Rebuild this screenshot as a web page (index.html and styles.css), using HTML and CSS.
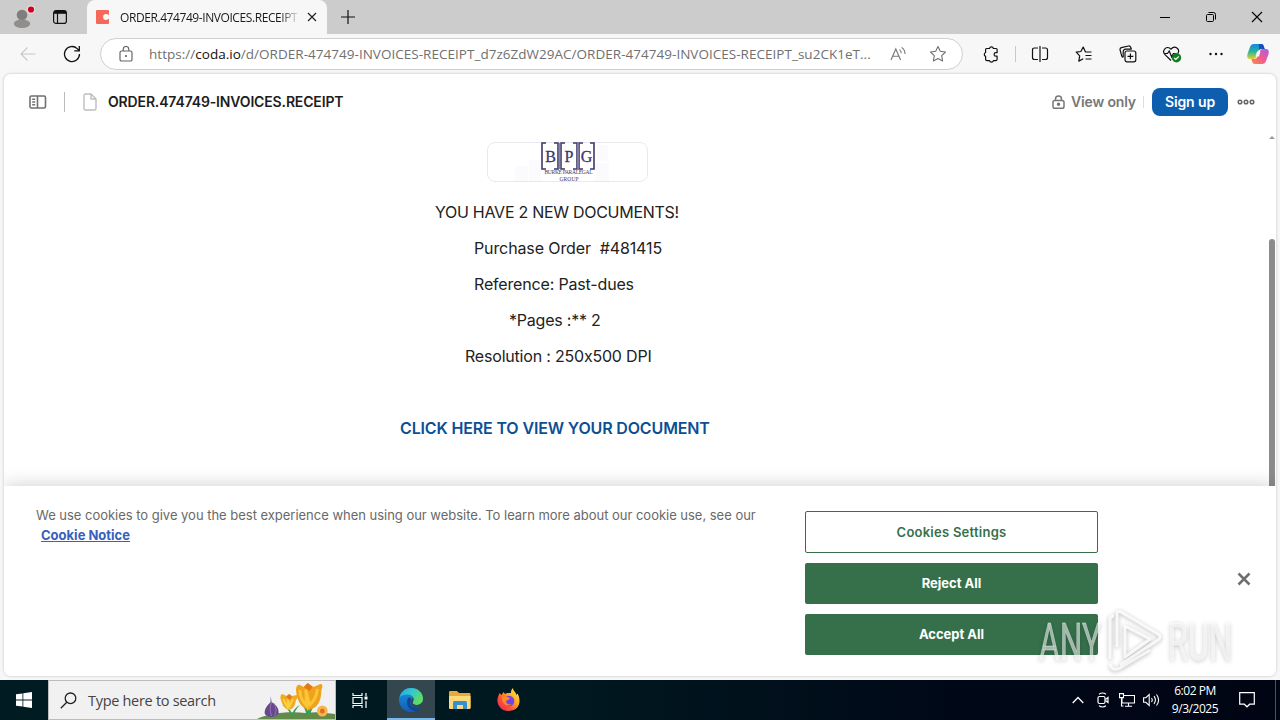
FILE: index.html
```
<!DOCTYPE html>
<html lang="en">
<head>
	<meta charset="utf-8">
	<title>ORDER.474749-INVOICES.RECEIPT</title>
	<link rel="stylesheet" href="styles.css">
</head>
<body>
<div class="screen">
	<!-- tab strip -->
	<div class="tabs">
		<svg class="avatar" width="26" height="24" viewBox="0 0 26 24">
			<circle cx="13" cy="10" r="5.3" fill="#817d7a"/>
			<ellipse cx="13" cy="18.800" rx="8.2" ry="4.2" fill="#918d8a"/>
			<circle cx="22" cy="4.500" r="4.300" fill="#e5dede"/>
			<circle cx="22" cy="4.500" r="3.1" fill="#d2001f"/>
		</svg>
		<svg class="workspaces" width="16" height="16" viewBox="0 0 16 16" fill="none" stroke="#111">
			<rect x="1.6" y="1.6" width="12.8" height="12.8" rx="2.5" stroke-width="1.2"/>
			<path d="M2 3.3h12" stroke-width="3"/><path d="M5.5 4v10" stroke-width="1.2"/>
		</svg>
		<div class="tab">
			<svg width="14" height="14" viewBox="0 0 14 14"><path d="M1 0h11a1 1 0 0 1 1 1v4.2c-1.200-.8-2-1.100-3-1.100a2.900 2.900 0 0 0 0 5.800c1 0 1.800-.3 3-1.100V13a1 1 0 0 1-1 1H1a1 1 0 0 1-1-1V1a1 1 0 0 1 1-1z" fill="#f5695b"/></svg>
			<span class="tab_title">ORDER.474749-INVOICES.RECEIPT</span>
			<svg class="tab_close" width="10" height="10" viewBox="0 0 10 10" stroke="#222" stroke-width="1.2"><path d="M1 1l8 8M9 1l-8 8"/></svg>
		</div>
		<svg class="new_tab" width="14" height="14" viewBox="0 0 14 14" stroke="#111" stroke-width="1.2"><path d="M7 0v14M0 7h14"/></svg>
		<div class="win_btns">
			<svg width="12" height="12" viewBox="0 0 12 12" stroke="#000"><path d="M1 6.500h10"/></svg>
			<svg width="12" height="12" viewBox="0 0 12 12" fill="none" stroke="#000"><rect x="1.500" y="3.500" width="7" height="7" rx="1"/><path d="M3.500 1.500h5a2 2 0 0 1 2 2v5"/></svg>
			<svg width="12" height="12" viewBox="0 0 12 12" stroke="#000" stroke-width="1.100"><path d="M1 1l10 10M11 1L1 11"/></svg>
		</div>
	</div>

	<!-- address bar -->
	<div class="toolbar">
		<svg class="back" width="16" height="16" viewBox="0 0 16 16" fill="none" stroke="#c8c8c8" stroke-width="1.100"><path d="M15.500 8H1M7.500 1.500L1 8l6.500 6.500"/></svg>
		<svg class="reload" width="18" height="18" viewBox="0 0 18 18" fill="none" stroke="#111" stroke-width="1.300"><path d="M16.500 9a7.500 7.500 0 1 1-2.300-5.400L16.300 5.700M16.300 1v4.900h-5"/></svg>
		<div class="address">
			<svg class="lock" width="14" height="16" viewBox="0 0 14 16" fill="none" stroke="#666" stroke-width="1.200"><rect x="1" y="5" width="12" height="10" rx="1.600"/><path d="M4.200 5V3.300a2.800 2.800 0 0 1 5.600 0V5"/><circle cx="7" cy="10" r=".5" fill="#666"/></svg>
			<span class="url">https://<b>coda.io</b>/d/ORDER-474749-INVOICES-RECEIPT_d7z6ZdW29AC/ORDER-474749-INVOICES-RECEIPT_su2CK1eT...</span>
			<svg class="read" width="17" height="16" viewBox="0 0 17 16" fill="none" stroke="#777" stroke-width="1.100"><path d="M1 14L5.800 3 10.600 14M2.700 10.300h6.200M9.500 3.600c1.300.9 1.700 2.100 1.700 3.700M11.600 1.400c2.300 1.500 3.400 3.600 3.400 6.500"/></svg>
			<svg class="fav" width="18" height="18" viewBox="0 0 18 18" fill="none" stroke="#707070" stroke-width="1.100" stroke-linejoin="round"><path d="M9 1.500l2.300 4.800 5.200.7-3.800 3.700.9 5.300L9 13.500 4.400 16l.9-5.300L1.500 7l5.200-.7z"/></svg>
		</div>
		<div class="tools">
			<span><svg width="18" height="18" viewBox="0 0 18 18" fill="none" stroke="#111" stroke-width="1.200" stroke-linejoin="round"><path d="M4.500 3.500h3a2 2 0 0 1 3.900 0h2.700q1 0 1 1v3.100h-1.200a1.800 1.800 0 0 0 0 3.600h1.200v3q0 1.400-1.400 1.400h-2.300a2 2 0 0 1-3.900 0H5q-1.400 0-1.400-1.400v-2.800a2.100 2.100 0 0 1 0-3.900v-3q0-1 .9-1z"/></svg></span>
			<i class="sep"></i>
			<span><svg width="18" height="18" viewBox="0 0 18 18" fill="none" stroke="#111" stroke-width="1.200"><path d="M7 3H3.500Q1.500 3 1.500 5v7.500q0 2 2 2H7M11 3h3.500q2 0 2 2v7.500q0 2-2 2H11M9 1v16"/></svg></span>
			<span><svg width="18" height="18" viewBox="0 0 18 18" fill="none" stroke="#111" stroke-width="1.200" stroke-linejoin="round"><path d="M16.500 7H10.500L8.200 2 5.900 6.500 1.200 7.200l3.500 3.600-.9 5.300 4.400-2.300M10.500 10.500h6M10.500 14h6"/></svg></span>
			<span><svg width="18" height="18" viewBox="0 0 18 18" fill="none" stroke="#111" stroke-width="1.200"><rect x="6" y="6" width="10.800" height="10.800" rx="2"/><path d="M11.400 8.500v5.800M8.500 11.400h5.800M4.200 12.300Q3 12 2.700 10.800L1.100 5Q.7 3.200 2.400 2.700L9.500 1q1.600-.3 2.200 1.200l.5 1.600M4.200 12.300V6.800q0-2.600 2.600-2.600h6"/></svg></span>
			<span><svg width="20" height="18" viewBox="0 0 20 18" fill="none" stroke="#111" stroke-width="1.200"><path d="M9 15.500L3 9.700C-.8 5.500 5-.5 9 4.200 13-.5 18.500 4.500 15.800 8.500M2 8.500h3.500L7.200 6l2.500 6 1.600-3.500h3"/><circle cx="14.500" cy="12.800" r="4.700" fill="#108020" stroke="none"/><path d="M12.200 13l1.600 1.500 2.900-3" stroke="#fff"/></svg></span>
			<span><svg width="14" height="4" viewBox="0 0 14 4" fill="#111"><circle cx="1.500" cy="2" r="1.200"/><circle cx="7" cy="2" r="1.200"/><circle cx="12.500" cy="2" r="1.200"/></svg></span>
			<span class="copilot"><svg width="22" height="22" viewBox="0 0 22 22">
				<defs>
					<linearGradient id="ca" x1="0" y1="0" x2="0" y2="1"><stop offset="0" stop-color="#1686dc"/><stop offset=".5" stop-color="#25b6a1"/><stop offset="1" stop-color="#e9d025"/></linearGradient>
					<linearGradient id="cb" x1="0" y1="1" x2="1" y2="0"><stop offset="0" stop-color="#ff8c43"/><stop offset=".5" stop-color="#ee5b91"/><stop offset="1" stop-color="#ae5be9"/></linearGradient>
				</defs>
				<path d="M7 1h7c2 0 2.500 1.200 3 3l.7 2h-3.500c-2 0-2.700 1-3.300 3L9.500 13c-.6 2-1.400 3-3.500 3H3C.3 16-.2 13.500.5 11L3 4c.8-2 1.800-3 4-3z" fill="url(#ca)"/>
				<path d="M12 1h2c2 0 2.500 1.200 3 3l.7 2h-3.500c-1 0-1.800.4-2.300 1z" fill="#184fc0"/>
				<path d="M15 21H8c-2 0-2.500-1.200-3-3l-.7-2h3c2 0 2.700-1 3.300-3l2-4c.6-2 1.400-3 3.500-3H19c2.700 0 3.200 2.500 2.500 5L19 18c-.8 2-1.800 3-4 3z" fill="url(#cb)"/>
				<path d="M10 8.500h3.500L12 13.500H8.500z" fill="#f7f7f7"/>
			</svg></span>
		</div>
	</div>

	<!-- web page -->
	<div class="page">
		<div class="doc_head">
			<svg class="panel" width="18" height="14" viewBox="0 0 18 14" fill="none" stroke="#707070" stroke-width="1.600"><rect x="1" y="1" width="15.500" height="12" rx="1.500"/><path d="M8.500 1v12M3.200 4.200h3M3.200 7h3M3.200 9.800h3"/></svg>
			<i class="line"></i>
			<svg class="file" width="14" height="18" viewBox="0 0 14 18" fill="none" stroke="#bdbdbd" stroke-width="1.400" stroke-linejoin="round"><path d="M2.500 1H8l5 5v9.500q0 1.500-1.500 1.500h-9Q1 17 1 15.500v-13Q1 1 2.500 1zM8 1v5h5"/></svg>
			<span class="doc_name">ORDER.474749-INVOICES.RECEIPT</span>
			<div class="doc_right">
				<svg width="13" height="14" viewBox="0 0 13 14" fill="none" stroke="#777" stroke-width="1.500"><rect x="1" y="5.500" width="11" height="7.700" rx="1.800"/><path d="M3.500 5.500V4a3 3 0 0 1 6 0v1.500"/><circle cx="6.500" cy="9.300" r="1" fill="#777"/></svg>
				<span class="view">View only</span>
				<i class="line2"></i>
				<button type="button" class="signup">Sign up</button>
				<svg class="dots" width="18" height="6" viewBox="0 0 18 6" fill="none" stroke="#666" stroke-width="1.500"><circle cx="3" cy="3" r="1.800"/><circle cx="9" cy="3" r="1.800"/><circle cx="15" cy="3" r="1.800"/></svg>
			</div>
		</div>
		<div class="doc_body">
			<div class="canvas">
				<svg class="logo" width="161" height="40" viewBox="0 0 161 40">
					<rect x=".5" y=".5" width="160" height="39" rx="7.500" fill="#fff" stroke="#e9e9ed"/>
					<path d="M28 24h13v15H28zM42 18h12v21H42zM110 3h11v16h-11zM108 21h14v18h-14z" fill="#fbfbfd"/>
					<g fill="none" stroke="#3d3767" stroke-width="1.600"><path d="M59 1h-4v26h4M67 1h4v26h-4M78 1h-4v26h4M86 1h4v26h-4M96 1h-4v26h4M103 1h4v26h-4"/></g>
					<path d="M72.500 1v26M91 1v26" stroke="#8a86a8" stroke-width="1.500"/>
					<g font-family="Liberation Serif, serif" fill="#3d3767" text-anchor="middle">
						<g stroke="#3d3767" stroke-width=".3"><text x="63.500" y="20" font-size="16">B</text><text x="82" y="20" font-size="16">P</text><text x="99.500" y="20" font-size="16">G</text></g>
						<text x="81.500" y="32" font-size="5.500" textLength="48">BURKE PARALEGAL</text><text x="82" y="38.800" font-size="5.500" textLength="19">GROUP</text>
					</g>
				</svg>
				<p class="l1">YOU HAVE 2 NEW DOCUMENTS!</p>
				<p class="l2">Purchase Order&nbsp; #481415</p>
				<p class="l3">Reference: Past-dues</p>
				<p class="l4">*Pages :** 2</p>
				<p class="l5">Resolution : 250x500 DPI</p>
				<p class="l6"><a>CLICK HERE TO VIEW YOUR DOCUMENT</a></p>
			</div>
			<div class="scroll">
				<svg width="6" height="3" viewBox="0 0 6 3" fill="#999"><path d="M0 3l3-3 3 3z"/></svg>
				<div class="thumb"></div>
			</div>
		</div>
		<div class="cookie">
			<div class="cookie_text">
				<p>We use cookies to give you the best experience when using our website. To learn more about our cookie use, see our</p>
				<a>Cookie Notice</a>
			</div>
			<div class="cookie_btns">
				<button type="button" class="btn settings">Cookies Settings</button>
				<button type="button" class="btn">Reject All</button>
				<button type="button" class="btn">Accept All</button>
			</div>
			<svg class="cookie_close" width="14" height="14" viewBox="0 0 14 14" stroke="#6f6f6f" stroke-width="2.500"><path d="M1.500 1.500l11 11M12.500 1.500l-11 11"/></svg>
		</div>
	</div>

	<!-- taskbar -->
	<div class="taskbar">
		<div class="start"><svg width="16" height="16" viewBox="0 0 16 16" fill="#fff"><path d="M0 2.300l6.500-.9v6.200H0zM7.300 1.300L16 0v7.600H7.300zM0 8.400h6.500v6.200L0 13.700zM7.300 8.400H16V16l-8.700-1.200z"/></svg></div>
		<div class="search">
			<svg width="17" height="17" viewBox="0 0 17 17" fill="none" stroke="#222" stroke-width="1.300"><circle cx="10.500" cy="6.300" r="5.300"/><path d="M6.800 10.200L.8 16.200"/></svg>
			<span>Type here to search</span>
			<svg class="flowers" width="78" height="38" viewBox="0 0 80 38" preserveAspectRatio="none">
				<path d="M0 38c10-5 30-8 50-6 12-2 22 0 30 1v5z" fill="#628a4b"/>
				<path d="M35 36c-1-6-5-9-9-12 6 1 9 5 10 10 1-5 4-8 8-10-4 4-6 8-7 12zM51 35c-2-9-5-13-9-17 6 2 9 7 10 12 2-6 6-9 12-12-5 5-8 10-10 17z" fill="#3e9c50"/>
				<path d="M14 15l1 6c5 3 8 7 7 12-4 4-11 4-14 0-1-5 3-9 6-12z" fill="#66498a"/>
				<path d="M15 21c-2 4-2 9 0 14M17 22c3 4 3 9 1 13" stroke="#9672b5" fill="none"/>
				<path d="M24 17c0-3 1-4 2-4l4 2 3-2 3 2 5-1c2 1 1 3-1 5-1 6-3 9-7 10-5-1-7-5-9-12z" fill="#f0ab22"/>
				<path d="M27 18l4 8 1-9 1 9 4-8" stroke="#fbd040" stroke-width="2" fill="none"/>
				<path d="M40 9c0-4 2-6 4-5l4 2 4-4 6 4 7-3c2 0 3 2 1 6 0 10-3 18-13 20-7-2-12-8-13-20z" fill="#f0a21c"/>
				<path d="M44 9c0 7 3 12 7 16L50 9l4 15c5-4 7-9 8-16" stroke="#fac634" stroke-width="3" fill="none"/>
				<path d="M48 6l4-4 5 4-3 4zM30 16l3-3 3 3-3 3z" fill="#e3781e"/>
				<circle cx="67" cy="30" r="5.500" fill="#f5b650"/><circle cx="67" cy="30" r="2.500" fill="#e36c22"/>
			</svg>
		</div>
		<div class="task"><svg width="17" height="17" viewBox="0 0 17 17" fill="none" stroke="#fff" stroke-width="1.200"><path d="M1 1v2.500h9V1M1 16v-2.500h9V16M1 5.500h9v6H1zM14 1v3M14 9v7"/><path d="M12.500 6h3" stroke-width="3"/></svg></div>
		<div class="task active"><svg width="24" height="24" viewBox="0 0 24 24">
			<defs>
				<linearGradient id="ea" x1="0" y1="0" x2="1" y2=".5"><stop offset="0" stop-color="#22a8e3"/><stop offset=".5" stop-color="#35c6d0"/><stop offset="1" stop-color="#62dc5d"/></linearGradient>
				<linearGradient id="eb" x1="0" y1="0" x2="0" y2="1"><stop offset="0" stop-color="#1796de"/><stop offset="1" stop-color="#145bb9"/></linearGradient>
			</defs>
			<circle cx="12" cy="12" r="12" fill="url(#eb)"/>
			<path d="M.5 10C2 3 7 0 12 0c7 0 12 5 12 10.500 0 4-3 6.500-6.500 6.500-3 0-5-1.400-3.500-3.500 2-4-1-7-5.500-7C4 6.500 1.200 8 .5 10z" fill="url(#ea)"/>
			<path d="M9 10c-3 6 1 13 8 13 3-1 4.500-2.500 5.800-4.800-3 1.600-8 2-10.800-1-1.600-1.700-1.300-3 .2-4.700C13 10 10.500 8.500 9 10z" fill="#10478e"/>
			<path d="M12.200 12.500c1.400-1 1.700-2.500.8-3.500 2 1.200 2 3 1 4.500-1 1.600.5 3.200 3.500 3.500 3 0 5-1.200 6.300-3.500.2 2-.2 3.500-1 4.700-3 1.600-7.500 1.500-10-.9-1.500-1.700-1.700-3.200-.6-4.800z" fill="#34474f"/>
		</svg></div>
		<div class="task"><svg width="22" height="19" viewBox="0 0 22 19"><path d="M0 1q0-1 1-1h7l2 2h10.500q1 0 1 1v14H0z" fill="#e9a93a"/><path d="M0 5h21.500v12q0 1-1 1H1q-1 0-1-1z" fill="#fbd978"/><path d="M4 18v-6.500q0-1.500 1.500-1.500h11q1.500 0 1.500 1.500V18h-4v-4H8v4z" fill="#3690cf"/><path d="M8 14h6v4H8z" fill="#f8d885"/></svg></div>
		<div class="task"><svg width="24" height="24" viewBox="0 0 24 24">
			<defs><linearGradient id="ff" x1="1" y1="0" x2="0" y2="1"><stop offset="0" stop-color="#fff44f"/><stop offset=".35" stop-color="#ffb127"/><stop offset=".65" stop-color="#ff5333"/><stop offset="1" stop-color="#e31b70"/></linearGradient></defs>
			<path d="M2.500 5l2 2 2-3 1.500 2c2-1.500 4-1 6-1-.5-2 1-4 2-5 0 3 3 4 3.500 7l1-1.500c4 7 2.500 17-8.500 17.500C4 23.500-1.500 16 1 9z" fill="url(#ff)"/>
			<circle cx="12" cy="13" r="5.300" fill="#7542e5"/><path d="M5 9c3-2 6 0 8 1-1 2-3 2-4 3 0 3 3 4 5.500 3-4 4-10 0-9.500-7z" fill="#ff8b22"/>
		</svg></div>
		<div class="tray">
			<svg class="up" width="12" height="8" viewBox="0 0 12 8" fill="none" stroke="#fff" stroke-width="1.300"><path d="M.7 7L6 1.500 11.300 7"/></svg>
			<svg class="cam" width="12" height="16" viewBox="0 0 12 16" fill="none" stroke="#fff" stroke-width="1.200"><rect x="1" y="4.500" width="7" height="7" rx="1.500"/><path d="M8.500 7.500l2.500-2v5l-2.500-2M2 2.200q3.500-2.400 7 0M2 13.800q3.500 2.400 7 0"/></svg>
			<svg class="net" width="16" height="14" viewBox="0 0 16 14" fill="none" stroke="#fff" stroke-width="1.100"><path d="M5 2.500h10.500v7.500H3V5M9.500 10v3M6 13.200h7M.5.600h4v4h-4zM2.500 4.600V13h2"/></svg>
			<svg class="vol" width="17" height="14" viewBox="0 0 17 14" fill="none" stroke="#fff" stroke-width="1.100"><path d="M.6 4.700h2.200L6.200 1.500v11L2.800 9.300H.6zM8.500 5q1.500 2 0 4M11 3.200q2.800 3.800 0 7.600M13.500 1.500q4.200 5.500 0 11"/></svg>
			<div class="clock"><span>6:02 PM</span><span>9/3/2025</span></div>
			<svg class="note" width="16" height="16" viewBox="0 0 16 16" fill="none" stroke="#fff" stroke-width="1.200"><path d="M.7.700h14.600v11.500h-4.600L8 14.800l-2.700-2.600H.7z"/></svg>
			<i class="desk"></i>
		</div>
	</div>

	<!-- watermark over the page -->
	<svg class="mark" width="220" height="72" viewBox="0 0 220 72">
		<g font-family="Roboto, sans-serif" font-size="52" fill="#fff" fill-opacity=".55" stroke="#fff" stroke-opacity=".4" stroke-width=".8">
			<text x="5" y="54" textLength="62" lengthAdjust="spacingAndGlyphs">ANY</text>
			<text x="134" y="54" textLength="64" lengthAdjust="spacingAndGlyphs">RUN</text>
		</g>
		<g fill="none" stroke="#fff" stroke-opacity=".8" stroke-width="3" stroke-linejoin="round">
			<path d="M76 53V13q0-3 4-3M83 41V8q0-4 4-2l37 22q4 3 0 6L86 59M91 20v31l25-18zM76 58q2 8 10 4l30-18"/>
		</g>
	</svg>
</div>
</body>
</html>
```
FILE: styles.css
```
body,p,button{margin:0;padding:0;}
body{background:#f7f7f7;overflow:hidden;}
button{border:none;font-family:inherit;}
svg{flex:none;display:block;}
.screen{position:relative;width:1280px;height:720px;display:flex;flex-direction:column;font-family:"Inter","Liberation Sans",sans-serif;font-feature-settings:"calt" 0;}

/* tab strip */
.tabs{height:34px;background:#ccc;display:flex;align-items:center;flex:none;font-family:"Open Sans","Noto Sans",sans-serif;}
.avatar{margin:0 0 0 9px;}
.workspaces{margin-left:17px;}
.tab{width:240px;height:34px;margin-left:19px;background:#f7f7f7;border-radius:8px 8px 0 0;display:flex;align-items:center;box-sizing:border-box;padding-left:9px;}
.tab_title{width:180px;margin-left:10px;overflow:hidden;white-space:nowrap;font-size:12px;letter-spacing:-0.42px;color:#1b1b1b;-webkit-mask-image:linear-gradient(90deg,#000 160px,transparent 180px);mask-image:linear-gradient(90deg,#000 160px,transparent 180px);}
.tab_close{margin-left:7px;}
.new_tab{margin-left:14px;}
.win_btns{margin-left:auto;display:flex;gap:34px;padding-right:17px;}

/* toolbar */
.toolbar{height:39px;background:#f7f7f7;display:flex;align-items:center;flex:none;font-family:"Open Sans","Noto Sans",sans-serif;}
.back{margin-left:20px;}
.reload{margin-left:27px;}
.address{width:863px;height:32px;box-sizing:border-box;margin-left:19px;border:1px solid #cfcfcf;border-radius:16px;background:#fff;display:flex;align-items:center;padding-left:18px;}
.url{width:725px;margin-left:16px;font-size:13.5px;letter-spacing:.025px;color:#707070;white-space:nowrap;}
.url b{font-weight:normal;color:#111;}
.read{margin-left:16px;}
.fav{margin-left:22px;}
.tools{display:flex;align-items:center;margin-left:6px;}
.tools span{width:44px;display:flex;justify-content:center;}
.tools .copilot{width:40px;}
.sep{width:1px;height:16px;background:#c8c8c8;margin:0 2px;}

/* page */
.page{height:604px;box-sizing:border-box;margin:0 3px 3px;border:1px solid #e3e3e3;border-radius:8px;background:#fff;overflow:hidden;display:flex;flex-direction:column;flex:none;box-shadow:0 0 3px rgba(0,0,0,.08);}
.doc_head{height:56px;display:flex;align-items:center;flex:none;}
.panel{margin-left:25px;}
.line{width:1px;height:20px;background:#bbb;margin-left:17px;}
.file{margin-left:18px;}
.doc_name{margin-left:11px;padding-bottom:1px;font-size:14px;font-weight:600;letter-spacing:-.15px;color:#1d1d1d;}
.doc_right{margin-left:auto;display:flex;align-items:center;padding-right:21px;}
.view{width:66px;margin-left:6px;padding-bottom:1px;font-size:14px;font-weight:600;letter-spacing:-.15px;color:#777;white-space:nowrap;}
.line2{width:1px;height:12px;background:#ddd;margin-left:6px;}
.signup{width:76px;height:28px;margin-left:8px;padding-bottom:1px;border-radius:8px;background:#0e5eaf;color:#fff;font-size:14px;font-weight:600;letter-spacing:-.1px;}
.dots{margin-left:9px;}
.doc_body{flex:1;display:flex;min-height:0;}
.canvas{flex:1;padding-top:12px;font-size:16px;line-height:36px;color:#222;white-space:nowrap;}
.logo{margin:0 0 12px 483px;}
.l1{padding-left:431px;letter-spacing:-.28px;}
.l2,.l3{padding-left:470px;}
.l2{letter-spacing:-.11px;}
.l3{letter-spacing:-.17px;}
.l4{padding-left:505px;letter-spacing:-.22px;}
.l5{padding-left:461px;letter-spacing:-.2px;}
.l6{padding:36px 0 0 396px;font-weight:600;letter-spacing:-.15px;}
.l6 a{color:#0b4f94;}
.scroll{width:8px;display:flex;flex-direction:column;align-items:center;padding-top:6px;}
.thumb{width:6px;flex:1;margin-top:100px;border-radius:3px 3px 0 0;background:#8b8b8b;}

/* cookie bar */
.cookie{height:190px;flex:none;box-sizing:border-box;background:#fff;display:flex;box-shadow:0 0 18px rgba(0,0,0,.2);position:relative;}
.cookie_text{width:769px;padding:19px 0 0 32px;box-sizing:border-box;font-size:13px;line-height:20px;letter-spacing:-.02px;color:#696969;white-space:nowrap;}
.cookie_text a{margin-left:5px;font-weight:700;letter-spacing:0;color:#3860be;text-decoration:underline;}
.cookie_btns{width:293px;margin-left:32px;padding-top:25px;display:flex;flex-direction:column;gap:10px;}
.btn{height:41px;padding-bottom:1px;border-radius:2px;background:#35704b;color:#fff;font-size:13px;font-weight:700;}
.settings{height:42px;border:1px solid #35704b;background:#fff;color:#35704b;font-weight:600;letter-spacing:.25px;}
.cookie_close{margin:86px 0 0 139px;}

/* taskbar */
.taskbar{height:40px;flex:none;display:flex;background:linear-gradient(90deg,#001b22 0,#001820 45%,#000817 75%,#000514 100%);}
.start{width:48px;display:flex;align-items:center;justify-content:center;}
.search{width:288px;box-sizing:border-box;border:1px solid #bcbcbc;background:#f1f1f1;display:flex;align-items:center;padding-left:11px;font-family:"Open Sans","Noto Sans",sans-serif;font-size:14.5px;letter-spacing:-.3px;color:#444;}
.search span{width:130px;margin-left:11px;white-space:nowrap;}
.flowers{margin-left:auto;}
.task{width:48px;display:flex;align-items:center;justify-content:center;margin-right:1px;}
.task.active{background:#34474f;box-shadow:inset 0 -2px #79b8ec;margin-left:2px;}
.tray{margin-left:auto;display:flex;align-items:center;}
.cam{margin-left:13px;}
.net{margin-left:10px;}
.vol{margin-left:8px;}
.clock{width:70px;display:flex;flex-direction:column;align-items:center;color:#fff;font-family:"Open Sans","Noto Sans",sans-serif;font-size:12px;line-height:18px;letter-spacing:-.45px;}
.note{margin-left:9px;}
.desk{width:1px;height:40px;margin:0 4px 0 20px;background:#4b5360;}

.mark{position:absolute;left:1034px;top:606px;filter:drop-shadow(0 1px 2px rgba(0,0,0,.35));}
```
